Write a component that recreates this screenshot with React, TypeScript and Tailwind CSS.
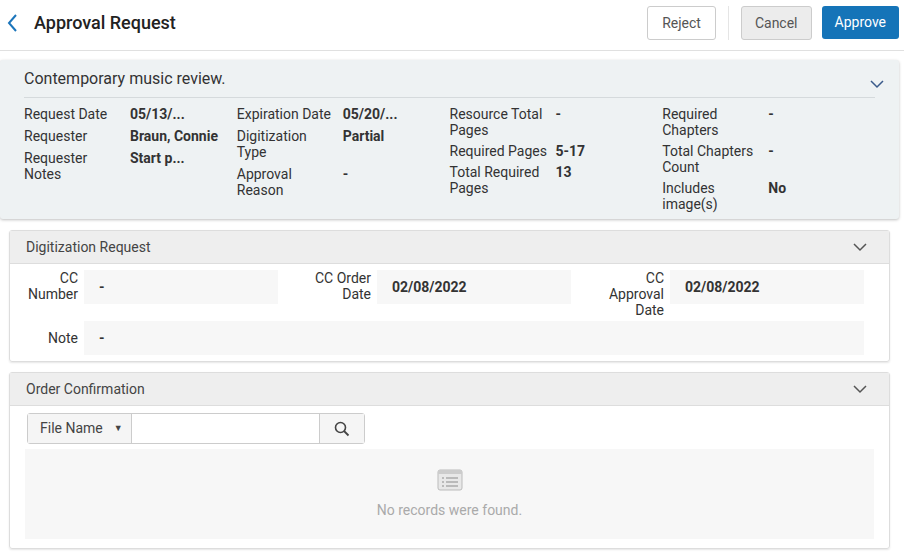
import React from "react";

const Chev = ({ c = "#3a5a8a" }: { c?: string }) => (
  <svg width="14" height="9" viewBox="0 0 14 9"><path d="M1 1l6 6 6-6" fill="none" stroke={c} strokeWidth="1.5" /></svg>
);

const F = ({ l, v }: { l: string; v: string }) => (
  <div className="flex">
    <div className="w-[106px] shrink-0 pr-2">{l}</div>
    <div className="font-bold">{v}</div>
  </div>
);

const CC = ({ l, v }: { l: React.ReactNode; v: string }) => (
  <div className="flex w-[293px] shrink-0 items-start">
    <div className="w-[69px] shrink-0 text-right pr-[6px] leading-[16px]">{l}</div>
    <div className="w-[194px] h-[34px] bg-[#f7f7f7] flex items-center pl-[15px] font-bold">{v}</div>
  </div>
);

export default function App() {
  return (
    <div className="w-[904px] h-[557px] bg-white text-[#333] text-[14px] overflow-hidden" style={{ fontFamily: "Roboto, 'Liberation Sans', sans-serif" }}>
      <div className="h-[51px] border-b border-[#e0e0e0] flex items-start pt-[6px] pl-[6px] pr-[5px]">
        <div className="h-[33px] flex items-center">
          <svg width="14" height="20" viewBox="0 0 14 20" className="mr-[14px]"><path d="M10 2L3 10l7 8" fill="none" stroke="#1b75bb" strokeWidth="2" /></svg>
          <div className="text-[18px] text-[#222] font-medium">Approval Request</div>
        </div>
        <div className="flex-1" />
        <button className="h-[34px] px-[14px] border border-[#ccc] rounded-[3px] text-[#555] bg-white">Reject</button>
        <div className="w-px h-[34px] bg-[#e5e5e5] mx-[12px]" />
        <button className="h-[34px] px-[13px] border border-[#ccc] rounded-[3px] text-[#555] bg-[#ececec] mr-[10px]">Cancel</button>
        <button className="h-[33px] px-[13px] rounded-[3px] text-white bg-[#1574b8]">Approve</button>
      </div>
      <div className="mt-[9px] w-[899px] h-[159px] bg-[#eef2f3] rounded-[3px] shadow-[0_1px_3px_rgba(0,0,0,0.25)] px-[24px] pt-[7px]">
        <div className="flex items-center justify-between border-b border-[#d5dadc] pb-[6px]">
          <div className="text-[16px] text-[#333]">Contemporary music review.</div>
          <div className="-mr-[9px] mt-[10px]"><Chev /></div>
        </div>
        <div className="grid grid-cols-4 mt-[8px] leading-[16px]">
          <div className="flex flex-col gap-[6px]"><F l="Request Date" v="05/13/..." /><F l="Requester" v="Braun, Connie" /><F l="Requester Notes" v="Start p..." /></div>
          <div className="flex flex-col gap-[6px]"><F l="Expiration Date" v="05/20/..." /><F l="Digitization Type" v="Partial" /><F l="Approval Reason" v="-" /></div>
          <div className="flex flex-col gap-[5px]"><F l="Resource Total Pages" v="-" /><F l="Required Pages" v="5-17" /><F l="Total Required Pages" v="13" /></div>
          <div className="flex flex-col gap-[5px]"><F l="Required Chapters" v="-" /><F l="Total Chapters Count" v="-" /><F l="Includes image(s)" v="No" /></div>
        </div>
      </div>
      <div className="mt-[11px] ml-[9px] w-[881px] h-[132px] border border-[#ddd] rounded-[3px] shadow-[0_1px_2px_rgba(0,0,0,0.1)]">
        <div className="h-[33px] bg-[#eeeeee] border-b border-[#ddd] flex items-center justify-between pl-[16px] pr-[22px]">
          <span className="text-[#444]">Digitization Request</span><Chev c="#555" />
        </div>
        <div className="flex pt-[6px] pl-[5px]">
          <CC l={<>CC<br />Number</>} v="-" />
          <CC l={<>CC Order<br />Date</>} v="02/08/2022" />
          <CC l={<>CC<br />Approval<br />Date</>} v="02/08/2022" />
        </div>
        <div className="flex items-center mt-[3px] pl-[5px]">
          <div className="w-[69px] text-right pr-[6px]">Note</div>
          <div className="w-[780px] h-[34px] bg-[#f7f7f7] flex items-center pl-[15px] font-bold">-</div>
        </div>
      </div>
      <div className="mt-[10px] ml-[9px] w-[881px] h-[177px] border border-[#ddd] rounded-[3px] shadow-[0_1px_2px_rgba(0,0,0,0.1)]">
        <div className="h-[33px] bg-[#eeeeee] border-b border-[#ddd] flex items-center justify-between pl-[16px] pr-[22px]">
          <span className="text-[#444]">Order Confirmation</span><Chev c="#555" />
        </div>
        <div className="ml-[17px] mt-[7px] w-[338px] h-[31px] border border-[#ccc] rounded-[3px] flex">
          <div className="w-[104px] bg-[#f5f5f5] border-r border-[#ccc] flex items-center pl-[12px] gap-[11px] text-[#444]">File Name <span className="text-[9px]">▼</span></div>
          <div className="flex-1 bg-white" />
          <div className="w-[45px] border-l border-[#ccc] bg-[#f5f5f5] flex items-center justify-center">
            <svg width="16" height="16" viewBox="0 0 16 16"><circle cx="6.5" cy="6.5" r="5" fill="none" stroke="#444" strokeWidth="1.6" /><path d="M10 10l4.5 4.5" stroke="#444" strokeWidth="1.8" /></svg>
          </div>
        </div>
        <div className="mx-[15px] mt-[5px] h-[90px] bg-[#f7f7f7] flex flex-col items-center pt-[20px]">
          <svg width="26" height="22" viewBox="0 0 26 22"><rect x="1" y="1" width="24" height="20" rx="2" fill="#e8e8e8" stroke="#bbb" /><rect x="1" y="1" width="24" height="4" fill="#ccc" /><path d="M5 9h2M9 9h12M5 13h2M9 13h12M5 17h2M9 17h12" stroke="#aaa" strokeWidth="1.5" /></svg>
          <div className="mt-[9px] text-[#aaa]">No records were found.</div>
        </div>
      </div>
    </div>
  );
}
